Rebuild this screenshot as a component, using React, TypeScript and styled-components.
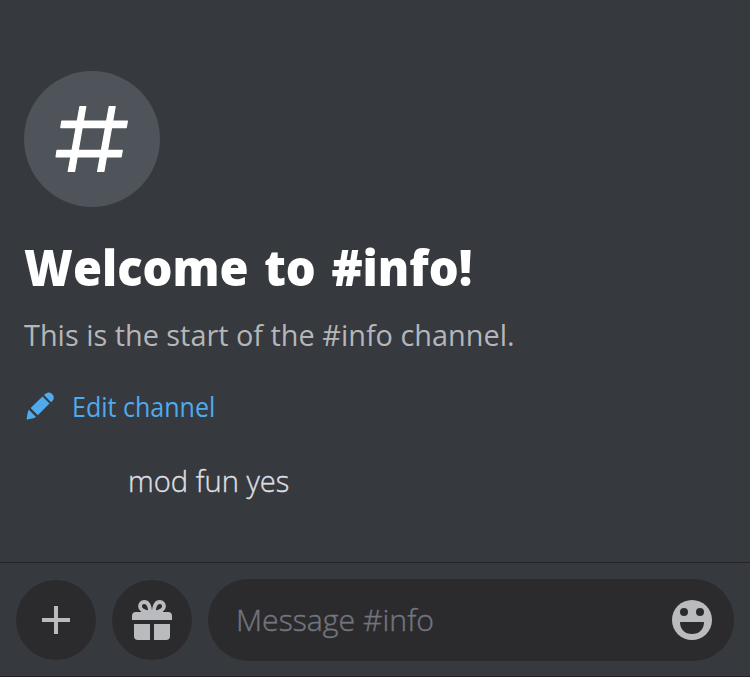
import React from "react";
import styled, { createGlobalStyle } from "styled-components";

const GlobalStyle = createGlobalStyle`
  * { box-sizing: border-box; }
  body { margin: 0; background: #36393e; font-family: "Open Sans", "Noto Sans", sans-serif; }
`;

const Screen = styled.main`
  display: flex;
  flex-direction: column;
  width: 750px;
  height: 677px;
  overflow: hidden;
  background: #36393e;
  border-bottom: 1px solid #271f28;
`;

const Intro = styled.section`
  flex: 1;
  display: flex;
  flex-direction: column;
  align-items: flex-start;
  padding: 71px 24px 0;
`;

const ChannelBadge = styled.div`
  width: 136px;
  height: 136px;
  border-radius: 50%;
  background: #4f545b;
  svg { display: block; }
`;

const Fitted = styled.span<{ $stretch: number }>`
  display: inline-block;
  white-space: nowrap;
  transform: scaleX(${(p) => p.$stretch});
  transform-origin: left center;
`;

const Title = styled.h1`
  margin: 26px 0 0;
  height: 68px;
  font-size: 49px;
  line-height: 68px;
  font-weight: 800;
  word-spacing: 3.5px;
  color: #fff;
`;

const Subtitle = styled.p`
  margin: 13px 0 0;
  height: 42px;
  font-size: 30px;
  line-height: 42px;
  color: #b5b6b9;
`;

const EditLink = styled.a`
  display: flex;
  align-items: center;
  gap: 16px;
  height: 40px;
  margin-top: 31px;
  font-size: 27px;
  line-height: 40px;
  color: #4dabee;
`;

const Message = styled.p`
  margin: 33px 0 0 104px;
  height: 42px;
  font-size: 30px;
  line-height: 42px;
  font-weight: 300;
  -webkit-text-stroke: 0.4px #dedfe0;
  color: #dedfe0;
`;

const Composer = styled.footer`
  display: flex;
  align-items: center;
  gap: 16px;
  height: 114px;
  padding: 0 16px;
  border-top: 1px solid #25242a;
`;

const RoundButton = styled.button`
  display: flex;
  align-items: center;
  justify-content: center;
  width: 80px;
  height: 80px;
  padding: 0;
  border: 0;
  border-radius: 50%;
  background: #2b2b2e;
  color: #b9bbbe;
`;

const InputPill = styled.div`
  flex: 1;
  display: flex;
  align-items: center;
  justify-content: space-between;
  height: 82px;
  padding: 0 22px 0 28px;
  border-radius: 41px;
  background: #2b2b2e;
  color: #b9bbbe;
`;

const Placeholder = styled.span`
  font-size: 30px;
  line-height: 42px;
  font-weight: 300;
  -webkit-text-stroke: 0.4px #73757d;
  color: #73757d;
`;

const HashIcon = () => (
  <svg width="136" height="136" viewBox="24 71 136 136" fill="#fff" stroke="#fff" strokeWidth="1.2" strokeLinejoin="round">
    <path d="M79.9 106.5H85.8L74.6 171.5H68.2Z" />
    <path d="M109.2 106.5H115.2L103.9 171.5H97.6Z" />
    <path d="M61.8 121.1H127.4L126.2 127.6H60.8Z" />
    <path d="M57 150.4H122.3L121.1 156.9H56.1Z" />
  </svg>
);

const PencilIcon = () => (
  <svg width="32" height="32" viewBox="24 391 32 32" fill="#4dabee">
    <path d="M42.5 396.5L49.5 403.5L37.8 415.2L30.6 408Z" />
    <path d="M44 395C46 393 48 392 50.2 392.8C52.8 393.8 54.3 396.2 53.7 398.8C53.4 400.2 52.3 401.1 51 402.3Z" />
    <path d="M28.9 409.8L36 416.9C35.3 417.6 34.5 418 33.5 418.2L27.3 419.5C26.8 419.6 26.5 419.3 26.6 418.8L27.8 412.3C28 411.3 28.3 410.5 28.9 409.8Z" />
  </svg>
);

const PlusIcon = () => (
  <svg width="28" height="28" viewBox="0 0 28 28" fill="currentColor">
    <path d="M12 0H16V12H28V16H16V28H12V16H0V12H12Z" />
  </svg>
);

const GiftIcon = () => (
  <svg width="40" height="40" viewBox="0 0 40 40" fill="currentColor">
    <path d="M0 20V16Q0 12 4 12H36Q40 12 40 16V20Z" />
    <path d="M2 24H18V40H6Q2 40 2 36Z" />
    <path d="M22 24H38V36Q38 40 34 40H22Z" />
    <path
      d="M18.2 12.8C18 6.6 15.9 2 12.2 2C9.6 2 8 3.9 8 6.3C8 9.5 11.2 11.7 18.2 12.8ZM21.8 12.8C22 6.6 24.1 2 27.8 2C30.4 2 32 3.9 32 6.3C32 9.5 28.8 11.7 21.8 12.8Z"
      fill="none"
      stroke="currentColor"
      strokeWidth="3.8"
    />
  </svg>
);

const SmileIcon = () => (
  <svg width="40" height="40" viewBox="0 0 40 40">
    <circle cx="20" cy="20" r="20" fill="currentColor" />
    <g fill="#2b2b2e">
      <circle cx="12" cy="12" r="4" />
      <circle cx="28" cy="12" r="4" />
      <path d="M8 22H32C32 29.4 27.2 34 20 34S8 29.4 8 22Z" />
    </g>
  </svg>
);

export default function App() {
  return (
    <>
      <GlobalStyle />
      <Screen>
        <Intro>
          <ChannelBadge><HashIcon /></ChannelBadge>
          <Title><Fitted $stretch={0.96}>Welcome to #info!</Fitted></Title>
          <Subtitle><Fitted $stretch={0.962}>This is the start of the #info channel.</Fitted></Subtitle>
          <EditLink><PencilIcon /><Fitted $stretch={0.927}>Edit channel</Fitted></EditLink>
          <Message><Fitted $stretch={0.971}>mod fun yes</Fitted></Message>
        </Intro>
        <Composer>
          <RoundButton aria-label="Add attachment"><PlusIcon /></RoundButton>
          <RoundButton aria-label="Send a gift"><GiftIcon /></RoundButton>
          <InputPill>
            <Placeholder><Fitted $stretch={1.007}>Message #info</Fitted></Placeholder>
            <SmileIcon />
          </InputPill>
        </Composer>
      </Screen>
    </>
  );
}
